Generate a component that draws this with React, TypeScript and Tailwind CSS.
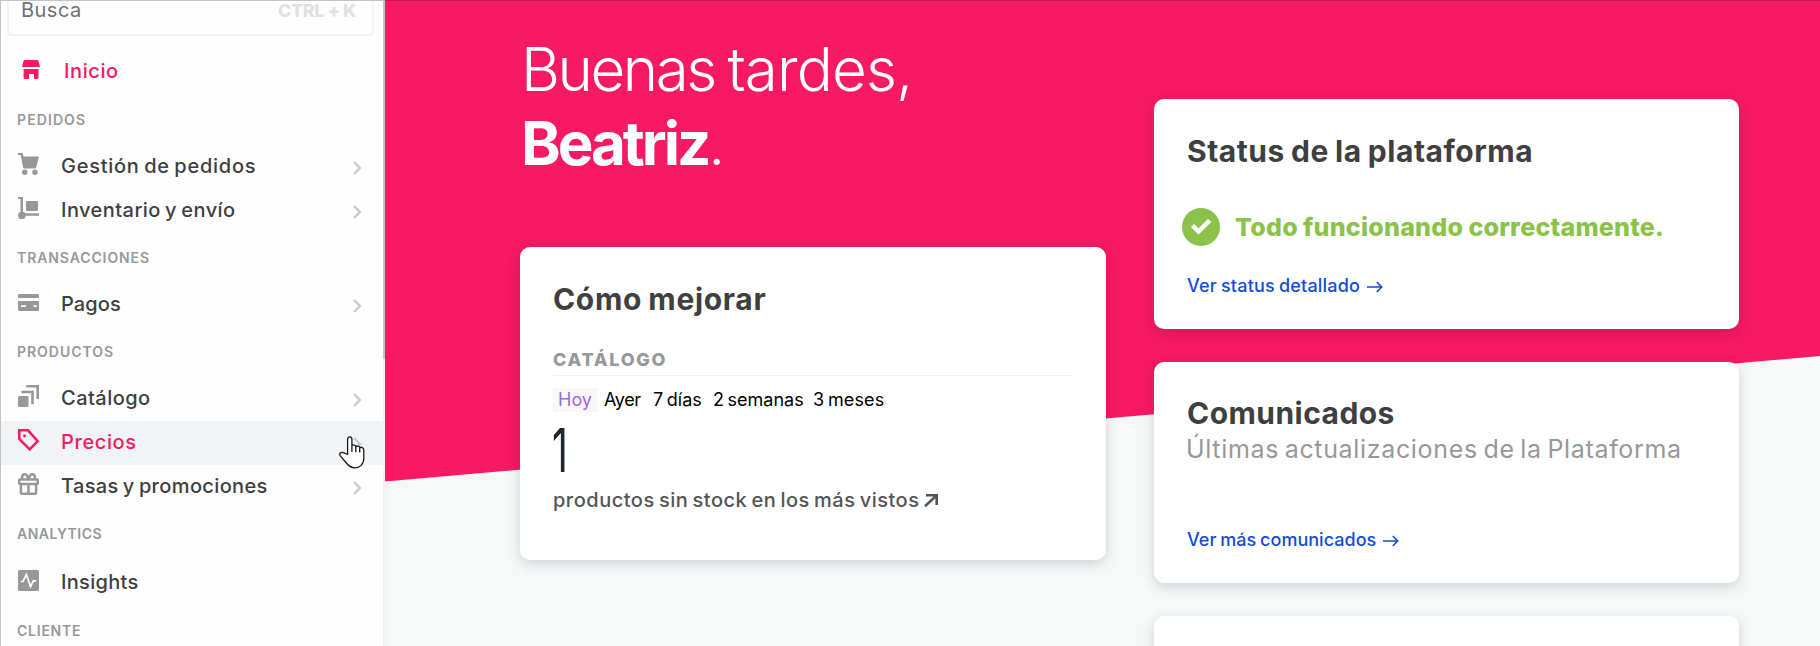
import React from "react";

const StoreIcon = () => (
  <svg width="18" height="19" viewBox="0 0 18 19" fill="currentColor">
    <path d="M2.6 0h12.8q.9 0 1.1.9L18 7H0L1.500 .9Q1.700 0 2.600 0zM1.600 9h14.900v8.600q0 1.400-1.300 1.400H12v-5H7v5H2.900q-1.300 0-1.300-1.400z" />
  </svg>
);

const CartIcon = () => (
  <svg width="21" height="22" viewBox="0 0 21 22" fill="currentColor">
    <path d="M0 0h4.400l1.200 3.500H21L18.300 14q-.4 1.500-1.900 1.500H6.700q-1.400 0-1.700-1.300L2.700 2H0z" />
    <circle cx="6.700" cy="19.300" r="2.700" />
    <circle cx="17" cy="19.300" r="2.700" />
  </svg>
);

const TrolleyIcon = () => (
  <svg width="21" height="22" viewBox="0 0 21 22" fill="currentColor">
    <path d="M0 0h5v14.800q2 .6 2.600 1.400H21v2.600H7.800A3.900 3.900 0 1 1 2.500 14.800V2H0z" />
    <rect x="8" y="4" width="12" height="10" rx="1" />
  </svg>
);

const PaymentIcon = () => (
  <svg width="21" height="17" viewBox="0 0 21 17" fill="currentColor">
    <path d="M1.300 0h18.400Q21 0 21 1.300V4H0V1.300Q0 0 1.300 0z" />
    <path fillRule="evenodd" d="M0 7h21v8.700q0 1.300-1.300 1.300H1.300Q0 17 0 15.700zM3 11.200v1.700h5v-1.700zm12.700 0v1.700h3v-1.700z" />
  </svg>
);

const CatalogIcon = () => (
  <svg width="21" height="22" viewBox="0 0 21 22" fill="currentColor">
    <rect y="11" width="10.500" height="11" rx="1.500" />
    <path d="M3.500 5.700H15.800v13.600h-2.600V8.300H3.500z" />
    <path d="M8.200 0H21v14h-2.600V2.600H8.200z" />
  </svg>
);

const TagIcon = () => (
  <svg width="22" height="22" viewBox="0 0 22 22" fill="none" stroke="currentColor" strokeWidth="2.500">
    <path d="M1.300 1.300h8.700l9.700 10.900-8 8.200L1.300 10z" />
    <circle cx="6.500" cy="6.700" r="1.500" fill="currentColor" stroke="none" />
  </svg>
);

const GiftIcon = () => (
  <svg width="21" height="22" viewBox="0 0 21 22" fill="none" stroke="currentColor" strokeWidth="2.500">
    <rect x="1.200" y="6.600" width="18.600" height="4.400" rx=".8" />
    <path d="M2.900 11v8.800q0 1 1 1h13.200q1 0 1-1V11M10.500 11v10" />
    <path d="M10.500 6.500C9.700 3 8.700 1.200 6.600 1.200 4.200 1.200 3.500 4 4.700 6.500M10.500 6.500c.8-3.500 1.800-5.300 3.900-5.300 2.400 0 3.100 2.800 1.900 5.300" />
  </svg>
);

const InsightsIcon = () => (
  <svg width="21" height="21" viewBox="0 0 21 21">
    <rect width="21" height="21" rx="1.500" fill="currentColor" />
    <path d="M2.800 11.500H5L8.300 4.500l4.300 12 2.700-5.700h2.900" fill="none" stroke="#fff" strokeWidth="1.700" />
  </svg>
);

const Chevron = () => (
  <svg width="9" height="14" viewBox="0 0 9 14" fill="none" stroke="#c9cacb" strokeWidth="2.300">
    <path d="M1 1l6 6-6 6" />
  </svg>
);

const HandCursor = () => (
  <svg width="26" height="33" viewBox="0 0 26 33" fill="#fff" stroke="#16181c" strokeWidth="1.300" strokeLinejoin="round">
    <path d="M8.600 18.500V3.200C8.600.2 12.900.2 12.900 3.200V9.500C14 8.600 16.600 8.800 16.800 10.600 18 9.600 20.500 9.900 20.700 11.600 22.300 10.800 24.800 11.500 24.800 14V22C24.800 28.500 20.500 31.900 16 31.900 11.500 31.900 9.500 30 7 26.500L1.300 19.800C-.3 17.200 2.200 15.600 4.500 16.700z" />
    <path d="M12.900 9.500V16M16.800 10.600V16.200M20.700 11.600V16.600" fill="none" />
  </svg>
);

const LinkArrow = () => (
  <svg width="16" height="12" viewBox="0 0 16 12" fill="none" stroke="currentColor" strokeWidth="1.600" className="mt-[2px]">
    <path d="M0 6h14.500M9.800 1l4.900 5-4.900 5" />
  </svg>
);

type ItemProps = {
  icon: React.ReactNode;
  label: string;
  tracking: string;
  arrow?: boolean;
  active?: boolean;
};

function Item({ icon, label, tracking, arrow = true, active = false }: ItemProps) {
  return (
    <div
      className={`flex h-11 shrink-0 items-center pl-[17px] pr-[21px] ${
        active ? "bg-[#f2f3f5] text-[#f71963]" : "text-[#3f3f40]"
      }`}
    >
      <span className={`mb-[6px] w-[43px] ${active ? "text-[#f71963]" : "text-[#979899]"}`}>{icon}</span>
      <span className={`mb-[3px] flex-1 text-[20px] leading-6 font-medium whitespace-nowrap [word-spacing:-1.5px] ${tracking}`}>{label}</span>
      {arrow && (
        <span className="relative mt-px">
          <Chevron />
          {active && (
            <span className="absolute -top-px -left-[14px]">
              <HandCursor />
            </span>
          )}
        </span>
      )}
    </div>
  );
}

function Section({ label, tracking }: { label: string; tracking: string }) {
  return (
    <div className={`h-[50px] shrink-0 pl-4 text-[14px] leading-[50px] font-semibold text-[#979899] ${tracking}`}>{label}</div>
  );
}

const cardClass = "rounded-[10px] bg-white px-[33px] shadow-[0_4px_14px_rgba(30,35,45,0.18)]";
const titleClass = "text-[30px] leading-[34px] font-bold text-[#3f3f40] whitespace-nowrap [word-spacing:-1.5px]";
const linkClass = "flex items-center gap-[7px] text-[18px] leading-6 font-medium text-[#134cd8] whitespace-nowrap [word-spacing:-1px]";

export default function App() {
  return (
    <div className="flex h-[646px] w-[1820px] overflow-hidden bg-[#f7f9f9] font-['Inter','Liberation_Sans',sans-serif]">
      <aside className="flex w-[385px] shrink-0 border-l border-[#c4c4c5] bg-[#fefefe]">
        <div className="flex w-[382px] flex-col border-t border-[#c4c4c5]">
          <div className="mr-[9px] ml-[6px] flex h-[35px] shrink-0 justify-between rounded-b-[4px] border-2 border-t-0 border-[#f2f3f5] pr-4 pl-3">
            <span className="text-[20px] leading-[19px] tracking-[0.48px] text-[#727273]">Busca</span>
            <span className="text-[18px] leading-[19px] font-extrabold tracking-[-0.4px] text-[#e0e1e2]">CTRL + K</span>
          </div>
          <div className="mt-[14px] mb-[3px] flex h-[42px] shrink-0 items-center pl-[21px] text-[#f71963]">
            <span className="mb-[3px] w-[42px]">
              <StoreIcon />
            </span>
            <span className="text-[20px] leading-6 font-medium tracking-[0.58px]">Inicio</span>
          </div>
          <Section label="PEDIDOS" tracking="tracking-[1.1px]" />
          <Item icon={<CartIcon />} label="Gestión de pedidos" tracking="tracking-[0.74px]" />
          <Item icon={<TrolleyIcon />} label="Inventario y envío" tracking="tracking-[0.44px]" />
          <Section label="TRANSACCIONES" tracking="tracking-[0.9px]" />
          <Item icon={<PaymentIcon />} label="Pagos" tracking="tracking-[0.11px]" />
          <Section label="PRODUCTOS" tracking="tracking-[0.97px]" />
          <Item icon={<CatalogIcon />} label="Catálogo" tracking="tracking-[0.46px]" />
          <Item icon={<TagIcon />} label="Precios" tracking="tracking-[0.6px]" active />
          <Item icon={<GiftIcon />} label="Tasas y promociones" tracking="tracking-[0.36px]" />
          <Section label="ANALYTICS" tracking="tracking-[0.5px]" />
          <div className="mt-[2px] mb-px">
            <Item icon={<InsightsIcon />} label="Insights" tracking="tracking-[0.3px]" arrow={false} />
          </div>
          <Section label="CLIENTE" tracking="tracking-[0.76px]" />
        </div>
        <div className="flex-1 bg-[#f2f3f5]">
          <div className="h-[359px] bg-[#c4c4c5]" />
        </div>
      </aside>

      <main className="relative flex-1">
        <svg className="absolute inset-0" width="1435" height="646" viewBox="0 0 1435 646">
          <path d="M0 0H1435V356L0 481.500z" fill="#f71963" />
          <path d="M0 481.500h4V646H0z" fill="#f3f4f6" />
          <path d="M0 0H1435V1H0z" fill="#c0184f" />
        </svg>
        <div className="relative flex gap-12 pl-[135px]">
          <div className="flex w-[586px] flex-col pt-8">
            <h1 className="pl-px text-[60px] leading-[74px] font-light text-white whitespace-nowrap">
              <span className="block tracking-[-2.4px] [word-spacing:-2px]">
                Buenas <span className="tracking-[-0.8px]">tardes,</span>
              </span>
              <span className="flex">
                <b className="font-bold tracking-[-3px]">Beatriz</b>
                <span>.</span>
              </span>
            </h1>
            <section className={`mt-[67px] h-[313px] pt-[35px] ${cardClass}`}>
              <h2 className={`tracking-[0.68px] ${titleClass}`}>Cómo mejorar</h2>
              <h3 className="mt-8 border-b border-[#f0f1f2] pb-[3px] text-[18px] leading-6 font-extrabold tracking-[1.7px] text-[#979899]">CATÁLOGO</h3>
              <div className="mt-3 flex text-[18px] leading-6 text-black whitespace-nowrap [word-spacing:-1.5px]">
                <span className="mr-[6px] w-[45px] bg-[#f7f9f9] pl-[5px] text-[#a26ad9]">Hoy</span>
                <span className="w-[49px] tracking-[-0.4px]">Ayer</span>
                <span className="w-[60px]">7 días</span>
                <span className="w-[100px]">2 semanas</span>
                <span className="tracking-[0.12px]">3 meses</span>
              </div>
              <div className="mt-2 -ml-px w-10 origin-left scale-x-65 text-[60px] leading-[60px] font-normal text-[#20262b]">1</div>
              <div className="mt-[6px] flex items-center gap-[5px] text-[20px] leading-7 font-medium text-[#545556] whitespace-nowrap">
                <span className="tracking-[0.5px] [word-spacing:-1.6px]">productos sin stock en los más vistos</span>
                <svg width="14" height="13" viewBox="0 0 14 13" fill="none" stroke="currentColor" strokeWidth="2.600">
                  <path d="M2 1.300h10.700V11M12.500 1.500L1 12.200" />
                </svg>
              </div>
            </section>
          </div>

          <div className="flex w-[585px] flex-col gap-[33px] pt-[99px]">
            <section className={`h-[230px] pt-[35px] ${cardClass}`}>
              <h2 className={`tracking-[0.54px] ${titleClass}`}>Status de la plataforma</h2>
              <div className="mt-10 -ml-[5px] flex h-[38px] items-center gap-[15px] text-[#8bc34a]">
                <svg width="38" height="38" viewBox="0 0 38 38" className="shrink-0">
                  <circle cx="19" cy="19" r="19" fill="currentColor" />
                  <path d="M10.500 17.500l6 6L27.700 12.300" fill="none" stroke="#fff" strokeWidth="4.500" />
                </svg>
                <span className="text-[25px] leading-[38px] font-extrabold tracking-[0.25px] whitespace-nowrap [word-spacing:-0.5px]">
                  Todo funcionando correctamente.
                </span>
              </div>
              <a className={`mt-7 ${linkClass}`}>
                <span className="tracking-[0.2px]">Ver status detallado</span>
                <LinkArrow />
              </a>
            </section>
            <section className={`h-[221px] pt-[34px] ${cardClass}`}>
              <h2 className={`tracking-[0.45px] ${titleClass}`}>Comunicados</h2>
              <p className="mt-1 -ml-px text-[25px] leading-[30px] tracking-[0.66px] text-[#979899] whitespace-nowrap [word-spacing:-2px]">Últimas actualizaciones de la Plataforma</p>
              <a className={`mt-16 ${linkClass}`}>
                <span className="tracking-[0.03px]">Ver más comunicados</span>
                <LinkArrow />
              </a>
            </section>
            <section className={`h-[221px] ${cardClass}`} />
          </div>
        </div>
      </main>
    </div>
  );
}
